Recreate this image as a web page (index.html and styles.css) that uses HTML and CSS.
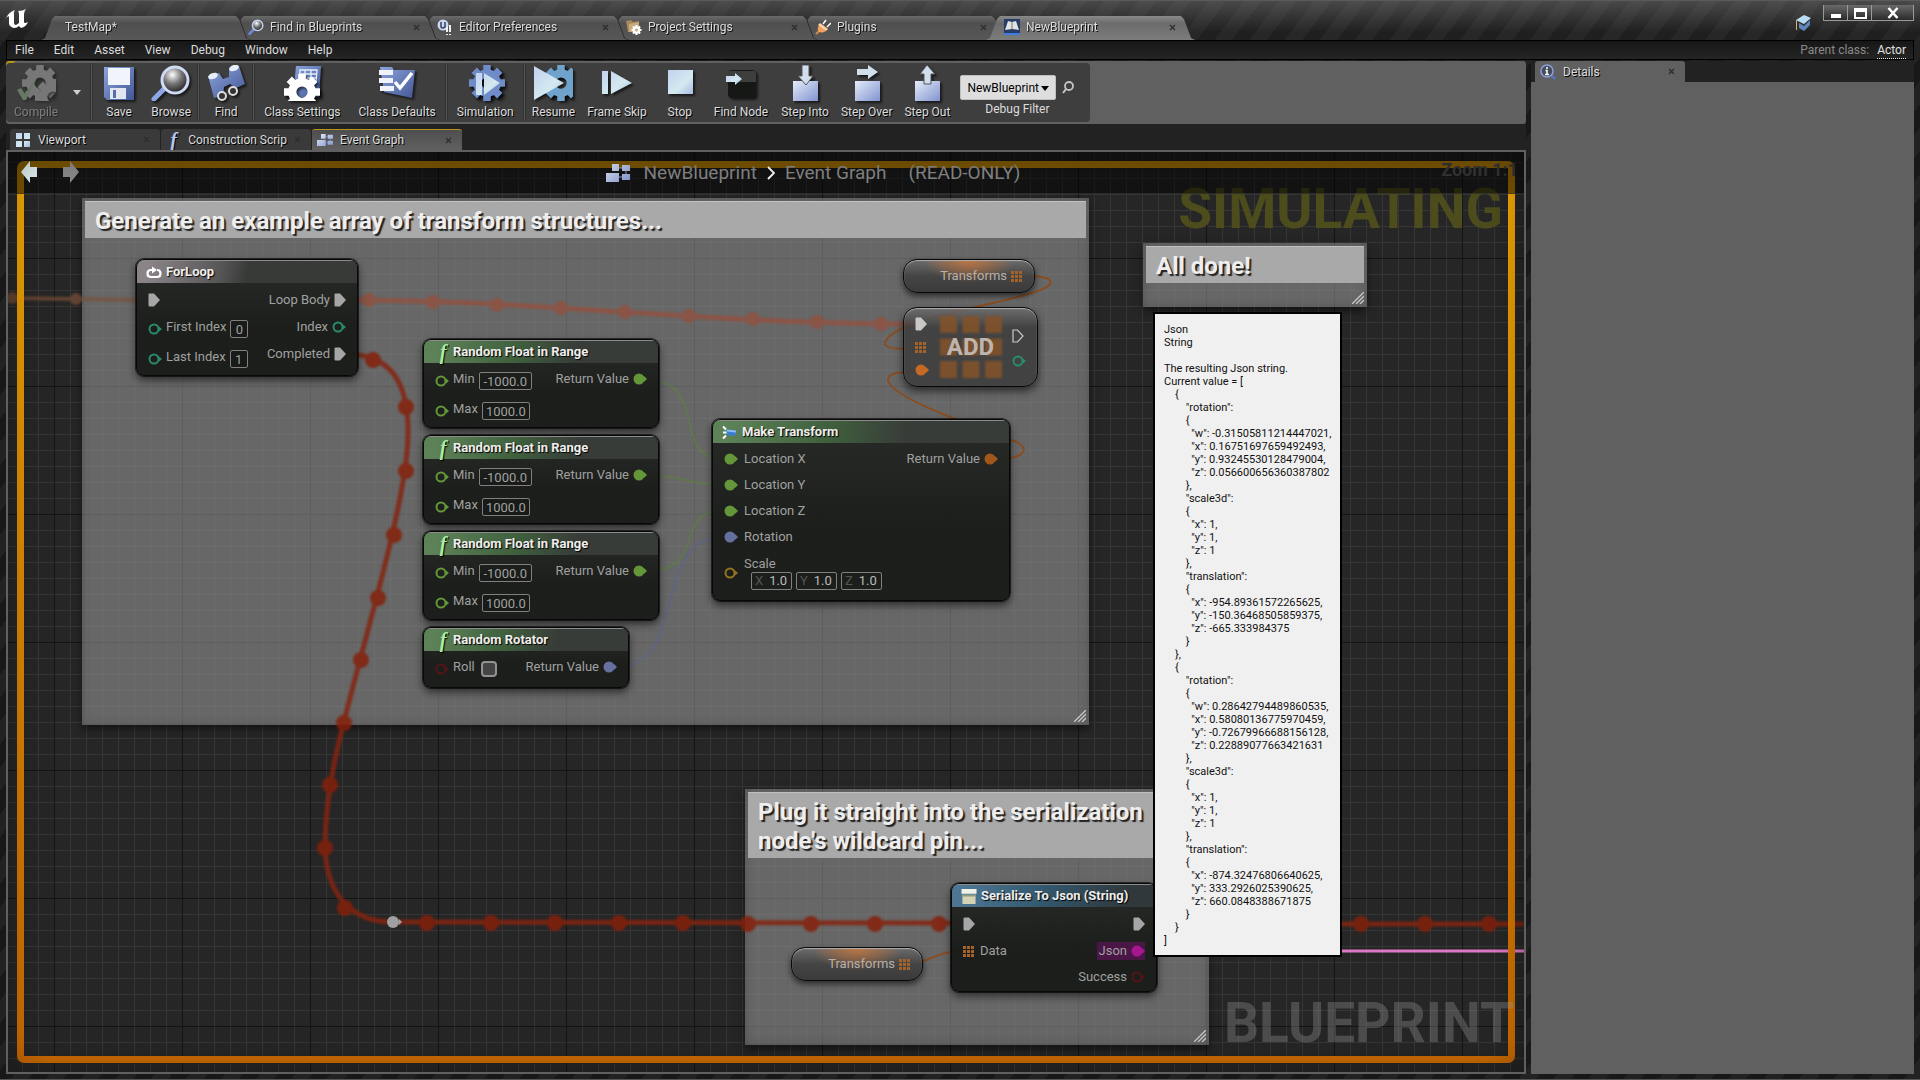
FILE: index.html
```
<!DOCTYPE html>
<html lang="en">
<head>
    <meta charset="UTF-8">
    <meta name="viewport" content="width=device-width, initial-scale=1.0">
    <title>NewBlueprint</title>
    <link rel="stylesheet" href="styles.css">
</head>
<body>
    <!-- Shared icon shapes -->
    <svg class="defs" aria-hidden="true">
        <defs>
            <linearGradient id="blue" x1="0" y1="0" x2="1" y2="1">
                <stop offset="0" stop-color="#e4ecfa"/>
                <stop offset="1" stop-color="#8193cf"/>
            </linearGradient>
            <linearGradient id="deep" x1="0" y1="0" x2="1" y2="1">
                <stop offset="0" stop-color="#8ca5dc"/>
                <stop offset="1" stop-color="#435796"/>
            </linearGradient>
            <linearGradient id="ice" x1="0" y1="0" x2="1" y2="1">
                <stop offset="0" stop-color="#c3d0ef"/>
                <stop offset="0.6" stop-color="#d3eaf0"/>
                <stop offset="1" stop-color="#a9b9e2"/>
            </linearGradient>
            <radialGradient id="lens" cx="0.4" cy="0.3" r="0.7">
                <stop offset="0" stop-color="#ffffff"/>
                <stop offset="0.5" stop-color="#777777"/>
                <stop offset="1" stop-color="#222222"/>
            </radialGradient>
        </defs>
        <symbol id="pin-open" viewBox="0 0 14 12">
            <circle cx="6" cy="6" r="4.5" fill="none" stroke="currentColor" stroke-width="2"/>
            <path d="M11 3.5L14 6L11 8.500z" fill="currentColor"/>
        </symbol>
        <symbol id="pin-full" viewBox="0 0 14 12">
            <circle cx="6" cy="6" r="5.5" fill="currentColor"/>
            <path d="M11 3L14 6L11 9z" fill="currentColor"/>
        </symbol>
        <symbol id="exec" viewBox="0 0 12 14">
            <path d="M1.500 0.500H6L12 7L6 13.500H1.500Q0.500 13.500 0.500 12.500V1.500Q0.500 0.500 1.500 0.500z" fill="currentColor"/>
        </symbol>
        <symbol id="exec-open" viewBox="0 0 12 14">
            <path d="M1 1H5.500L11 7L5.500 13H1z" fill="none" stroke="currentColor" stroke-width="1.2"/>
        </symbol>
        <symbol id="array" viewBox="0 0 11 11">
            <path d="M0 0h3v3H0zM4 0h3v3H4zM8 0h3v3H8zM0 4h3v3H0zM4 4h3v3H4zM8 4h3v3H8zM0 8h3v3H0zM4 8h3v3H4zM8 8h3v3H8z" fill="currentColor"/>
        </symbol>
        <symbol id="gear" viewBox="-12 -12 24 24">
            <g fill="currentColor">
                <path d="M-2.500 -12h5v5h-5zM-2.500 7h5v5h-5z"/>
                <path d="M-2.500 -12h5v5h-5zM-2.500 7h5v5h-5z" transform="rotate(45)"/>
                <path d="M-2.500 -12h5v5h-5zM-2.500 7h5v5h-5z" transform="rotate(90)"/>
                <path d="M-2.500 -12h5v5h-5zM-2.500 7h5v5h-5z" transform="rotate(135)"/>
            </g>
            <circle r="6.500" fill="none" stroke="currentColor" stroke-width="5.500"/>
        </symbol>
        <symbol id="graph" viewBox="0 0 24 18">
            <path d="M6 0h7v7H6zM16 1h8v6h-8zM0 9h13v9H0zM16 10h8v6h-8z" fill="url(#blue)"/>
            <path d="M13 4h3M13 13h3M20 7v3" stroke="#8fa0d0"/>
        </symbol>
        <symbol id="glass" viewBox="0 0 20 20">
            <path d="M2 18.500L8 12" stroke="#6c88cc" stroke-width="3.500" stroke-linecap="round"/>
            <circle cx="12" cy="8" r="6.500" fill="url(#lens)" stroke="#c4d0f0" stroke-width="1.800"/>
        </symbol>
        <symbol id="close" viewBox="0 0 7 7">
            <path d="M1 1L6 6M6 1L1 6" stroke="currentColor" stroke-width="1.4"/>
        </symbol>
        <symbol id="grip" viewBox="0 0 12 12">
            <path d="M0 12L12 0M4 12L12 4M8 12L12 8" stroke="#c8c8c8" stroke-width="1.3"/>
        </symbol>
    </svg>

    <!-- Title bar -->
    <header class="titlebar">
        <svg class="logo" viewBox="0 0 22 20">
            <path d="M0 9Q3 3 9 1Q7 3 8 6V14Q8 16 10 16L13 14V5Q13 3 12 2Q17 2 20 0Q18 2 18 5V13Q18 15 22 13Q20 18 15 19L13 17Q11 19 8 19Q4 18 3 15V8Q3 6 0 9z" fill="#ffffff"/>
        </svg>
        <nav class="doc-tabs">
            <div class="doc-tab"><button type="button" class="no-icon"><span>TestMap*</span></button></div>
            <div class="doc-tab"><button type="button"><svg class="i16"><use href="#glass"/></svg><span>Find in Blueprints</span><svg class="x"><use href="#close"/></svg></button></div>
            <div class="doc-tab"><button type="button">
                <svg class="i16" viewBox="0 0 16 16"><circle cx="6" cy="6" r="5.500" fill="#cdd7ef"/><path d="M4 3v5q0 1 2 1l2-1V3" stroke="#32405c" stroke-width="1.500" fill="none"/><path d="M10 8v5M13 6v7M10 15v1M13 15v1" stroke="#fff" stroke-width="1.800"/></svg>
                <span>Editor Preferences</span><svg class="x"><use href="#close"/></svg></button></div>
            <div class="doc-tab"><button type="button">
                <svg class="i16" viewBox="0 0 16 16"><path d="M0 2l5-1 2 2 6-1v11H2z" fill="#a8885c"/><path d="M3 5l10-2v10H3z" fill="#c6aa78"/><svg x="5" y="6" width="11" height="10" color="#fff"><use href="#gear"/></svg></svg>
                <span>Project Settings</span><svg class="x"><use href="#close"/></svg></button></div>
            <div class="doc-tab"><button type="button">
                <svg class="i16" viewBox="0 0 16 16"><path d="M1 15l4-4" stroke="#d98a48" stroke-width="2"/><path d="M4 6l7 6q-5 3-8 0-1-3 1-6z" fill="#f0a060"/><path d="M5 4l8 6-2 2-8-6z" fill="#ffd2a0"/><path d="M8 5l3-4M12 8l4-4" stroke="#fff" stroke-width="1.500"/></svg>
                <span>Plugins</span><svg class="x"><use href="#close"/></svg></button></div>
            <div class="doc-tab active"><button type="button">
                <svg class="i16" viewBox="0 0 16 16"><path d="M0 0h16v16H0z" fill="#263c66"/><path d="M0 14h16v2H0z" fill="#3f7be0"/><path d="M1 11L4 2l4 1 4-1 3 9-7-1z" fill="#e2e2e2"/><path d="M8 3v7" stroke="#777"/></svg>
                <span>NewBlueprint</span><svg class="x"><use href="#close"/></svg></button></div>
        </nav>
        <div class="window-tools">
            <svg class="tutorial" viewBox="0 0 16 16"><path d="M1 5l8-5 7 3-7 6z" fill="#b9dcf6"/><path d="M4 8l5 3 6-6v5l-6 6-5-3z" fill="#5e86b8"/><path d="M1.500 5v10" stroke="#d8b070"/></svg>
            <div class="window-buttons">
                <button type="button" aria-label="Minimize"><svg viewBox="0 0 14 12"><path d="M2 7h10v4H2z" fill="#fff"/></svg></button>
                <button type="button" aria-label="Maximize"><svg viewBox="0 0 14 12"><path d="M2 2h11v9H2z" fill="none" stroke="#fff" stroke-width="2"/><path d="M2 4h11" stroke="#fff" stroke-width="2"/></svg></button>
                <button type="button" class="wide" aria-label="Close"><svg viewBox="0 0 14 12"><path d="M2.500 1l9 10M11.500 1l-9 10" stroke="#fff" stroke-width="2.600"/></svg></button>
            </div>
        </div>
    </header>

    <!-- Menu bar -->
    <div class="menubar">
        <nav class="menu">
            <button type="button">File</button>
            <button type="button">Edit</button>
            <button type="button">Asset</button>
            <button type="button">View</button>
            <button type="button">Debug</button>
            <button type="button">Window</button>
            <button type="button">Help</button>
        </nav>
        <div class="parent-class">Parent class: <a href="#">Actor</a></div>
    </div>

    <main class="workspace">
        <div class="editor">
            <!-- Toolbar -->
            <div class="toolbar">
                <div class="tools">
                    <button type="button" class="tool" disabled>
                        <svg viewBox="0 0 40 36"><svg x="4" y="0" width="20" height="20" color="#ccc"><use href="#gear"/></svg><svg x="17" y="14" width="22" height="22" color="#ccc"><use href="#gear"/></svg><path d="M1 25l4-2 4 6L23 9 10 35H7z" fill="#a4cfa0"/></svg>
                        <span>Compile</span>
                    </button>
                    <button type="button" class="caret" aria-label="Compile options"><svg viewBox="0 0 8 5"><path d="M0 0h8L4 5z" fill="#d0d0d0"/></svg></button>
                    <i class="sep"></i>
                    <button type="button" class="tool">
                        <svg viewBox="0 0 40 36"><path d="M5 2h30v33H8l-3-3z" fill="url(#deep)"/><path d="M9 3h22v17H9z" fill="#f1f4fb"/><path d="M11 23h16v11H11z" fill="#e2e6f0"/><path d="M14 25h3v8h-3z" fill="#5a6ca6"/></svg>
                        <span>Save</span>
                    </button>
                    <button type="button" class="tool">
                        <svg viewBox="0 0 40 36"><path d="M3 34L14 23" stroke="#8da7e6" stroke-width="5" stroke-linecap="round"/><circle cx="24" cy="15" r="13" fill="url(#lens)" stroke="#cfdaf5" stroke-width="3"/></svg>
                        <span>Browse</span>
                    </button>
                    <i class="sep"></i>
                    <button type="button" class="tool">
                        <svg viewBox="0 0 40 36"><path d="M2 11l11-3 4 6 6-2V3l10-2 6 18-9 4-6-4-6 3-1 9-9 2z" fill="url(#deep)"/><ellipse cx="7" cy="11" rx="5" ry="3" fill="#e8eef8" transform="rotate(-20 7 11)"/><ellipse cx="28" cy="3" rx="5" ry="3" fill="#e8eef8" transform="rotate(-20 28 3)"/><circle cx="16" cy="31" r="4" fill="#333" stroke="#ddd" stroke-width="2"/><circle cx="27" cy="26" r="4" fill="#333" stroke="#ddd" stroke-width="2"/></svg>
                        <span>Find</span>
                    </button>
                    <i class="sep"></i>
                    <button type="button" class="tool roomy">
                        <svg viewBox="0 0 40 36"><path d="M14 1h25l-2 31H11z" fill="url(#deep)"/><path d="M18 5h17l-1 12H17zM23 5v12M29 5v12M17 9h18M17 13h18" fill="none" stroke="#e8eefb" stroke-width="1.300"/><svg x="0" y="9" width="26" height="26" color="#fff"><use href="#gear"/></svg></svg>
                        <span>Class Settings</span>
                    </button>
                    <button type="button" class="tool roomy">
                        <svg viewBox="0 0 40 36"><path d="M3 2h12l2 3h21l-3 28L7 27z" fill="url(#deep)"/><path d="M2 5h14v5H2zM2 13h14v5H2zM3 21h14v5H3z" fill="#f0f3fb"/><path d="M18 17l5 6L35 8" fill="none" stroke="#fff" stroke-width="3.500"/></svg>
                        <span>Class Defaults</span>
                    </button>
                    <i class="sep"></i>
                    <button type="button" class="tool roomy">
                        <svg viewBox="0 0 40 36"><svg x="2" y="0" width="36" height="36" color="#6f8bc8"><use href="#gear"/></svg><path d="M11 8h6v22h-6zM19 8l16 10-16 12z" fill="url(#ice)"/></svg>
                        <span>Simulation</span>
                    </button>
                    <i class="sep"></i>
                    <button type="button" class="tool">
                        <svg viewBox="0 0 40 36"><svg x="8" y="0" width="34" height="34" color="#6fa3cc"><use href="#gear"/></svg><path d="M1 1l30 17L1 35z" fill="url(#ice)"/></svg>
                        <span>Resume</span>
                    </button>
                    <button type="button" class="tool">
                        <svg viewBox="0 0 40 36"><path d="M5 6h6v23H5zM14 6l21 12-21 11z" fill="url(#ice)"/></svg>
                        <span>Frame Skip</span>
                    </button>
                    <button type="button" class="tool spaced">
                        <svg viewBox="0 0 40 36"><path d="M8 5h25v24H8z" fill="url(#ice)"/></svg>
                        <span>Stop</span>
                    </button>
                    <button type="button" class="tool spaced">
                        <svg viewBox="0 0 40 36"><rect x="7" y="5" width="28" height="28" rx="4" fill="#151815"/><path d="M9 6h24q2 0 2 3v8H7V9q0-3 2-3z" fill="#3c3f3c"/><path d="M5 11h9V8l7 6-7 6v-3H5z" fill="url(#ice)"/></svg>
                        <span>Find Node</span>
                    </button>
                    <button type="button" class="tool">
                        <svg viewBox="0 0 40 36"><path d="M8 16h25v20H8z" fill="url(#blue)"/><path d="M17 0h7v11h4l-7 9-8-9h4z" fill="#d0deee" stroke="#555"/></svg>
                        <span>Step Into</span>
                    </button>
                    <button type="button" class="tool">
                        <svg viewBox="0 0 40 36"><path d="M8 16h25v20H8z" fill="url(#blue)"/><path d="M10 4h11V0l10 7-10 7v-4H10z" fill="#d0deee"/></svg>
                        <span>Step Over</span>
                    </button>
                    <button type="button" class="tool">
                        <svg viewBox="0 0 40 36"><path d="M8 16h25v20H8z" fill="url(#blue)"/><path d="M17 19V9h-4l7-9 8 9h-4v10z" fill="#d0deee" stroke="#555"/></svg>
                        <span>Step Out</span>
                    </button>
                    <div class="debug-filter">
                        <div class="filter-row">
                            <span class="select">
                                <select id="debug-filter"><option>NewBlueprint</option></select>
                                <svg viewBox="0 0 8 5"><path d="M0 0h8L4 5z" fill="#000"/></svg>
                            </span>
                            <button type="button" aria-label="Search"><svg viewBox="0 0 12 14"><circle cx="7" cy="5" r="4" fill="none" stroke="#c4c4c4" stroke-width="1.800"/><path d="M4 8L1 12" stroke="#c4c4c4" stroke-width="2"/></svg></button>
                        </div>
                        <label for="debug-filter">Debug Filter</label>
                    </div>
                </div>
            </div>

            <!-- Graph tabs -->
            <nav class="sub-tabs">
                <button type="button" class="sub-tab"><svg class="i16" viewBox="0 0 16 16"><path d="M1 1h6v6H1zM9 1h6v6H9zM1 9h6v6H1zM9 9h6v6H9z" fill="url(#ice)"/></svg><span>Viewport</span><svg class="x"><use href="#close"/></svg></button>
                <button type="button" class="sub-tab"><i class="fn blue">f</i><span>Construction Scrip</span><svg class="x"><use href="#close"/></svg></button>
                <button type="button" class="sub-tab active"><svg class="i16"><use href="#graph"/></svg><span>Event Graph</span><svg class="x"><use href="#close"/></svg></button>
            </nav>

            <!-- Graph -->
            <section class="graph">
                <div class="watermark simulating">SIMULATING</div>
                <div class="watermark blueprint">BLUEPRINT</div>

                <div class="comment" id="comment-generate">
                    <h2>Generate an example array of transform structures...</h2>
                    <svg class="grip"><use href="#grip"/></svg>
                </div>
                <div class="comment" id="comment-done">
                    <h2>All done!</h2>
                    <svg class="grip"><use href="#grip"/></svg>
                </div>
                <div class="comment" id="comment-plug">
                    <h2>Plug it straight into the serialization node's wildcard pin...</h2>
                    <svg class="grip"><use href="#grip"/></svg>
                </div>

                <svg class="wires" viewBox="8 152 1516 920" fill="none">
                    <g class="wire-old">
                        <path d="M8 298L147 300"/>
                        <circle cx="12" cy="298" r="6"/><circle cx="76" cy="299" r="6"/>
                    </g>
                    <g class="wire-loop">
                        <path d="M346 300C540 300 700 324 915 324"/>
                        <circle cx="369" cy="300" r="7"/><circle cx="433" cy="302" r="7"/><circle cx="497" cy="305" r="7"/>
                        <circle cx="561" cy="308" r="7"/><circle cx="625" cy="312" r="7"/><circle cx="689" cy="316" r="7"/>
                        <circle cx="753" cy="319" r="7"/><circle cx="817" cy="322" r="7"/><circle cx="881" cy="324" r="7"/>
                    </g>
                    <g class="wire-exec">
                        <path d="M346 354C392 354 409 384 408 435C407 490 378 592 360 660C344 722 325 782 325 848C327 896 352 922 393 922L963 923"/>
                        <path d="M1145 924H1524"/>
                        <circle cx="373" cy="360" r="8"/><circle cx="406" cy="407" r="8"/><circle cx="406" cy="471" r="8"/>
                        <circle cx="394" cy="535" r="8"/><circle cx="378" cy="598" r="8"/><circle cx="361" cy="660" r="8"/>
                        <circle cx="344" cy="723" r="8"/><circle cx="330" cy="785" r="8"/><circle cx="325" cy="848" r="8"/>
                        <circle cx="345" cy="908" r="8"/><circle cx="427" cy="923" r="8"/><circle cx="491" cy="923" r="8"/>
                        <circle cx="555" cy="923" r="8"/><circle cx="619" cy="923" r="8"/><circle cx="683" cy="923" r="8"/>
                        <circle cx="748" cy="924" r="8"/><circle cx="811" cy="924" r="8"/><circle cx="875" cy="924" r="8"/>
                        <circle cx="939" cy="924" r="8"/><circle cx="1361" cy="924" r="8"/><circle cx="1425" cy="924" r="8"/>
                        <circle cx="1489" cy="924" r="8"/>
                    </g>
                    <g class="wire-float">
                        <path d="M646 380C710 380 670 459 723 459"/>
                        <path d="M646 475C680 475 690 485 723 485"/>
                        <path d="M646 571C710 571 670 511 723 511"/>
                    </g>
                    <path class="wire-rotator" d="M616 667C690 667 650 537 723 537"/>
                    <g class="wire-struct">
                        <path d="M1022 276C1050 275 1054 281 1048 286C1028 302 888 316 885 344C887 349 898 349 915 349"/>
                        <path d="M997 459C1030 459 1030 444 1010 440C980 428 890 398 888 380C889 372 900 372 915 372"/>
                        <path d="M904 964C930 964 935 951 963 951"/>
                    </g>
                    <path class="wire-string" d="M1145 951H1524"/>
                    <ellipse cx="393" cy="922" rx="6" ry="6" fill="#a0a0a0"/>
                    <path d="M399 919l3 3-3 3z" fill="#a0a0a0"/>
                </svg>

                <article class="node grey" id="for-loop">
                    <h3><svg class="head-icon" viewBox="0 0 16 14"><path d="M7 4.500H5Q1.500 4.500 1.500 8Q1.500 11.500 5 11.500H11Q14.500 11.500 14.500 8Q14.500 4.500 11 4.500" fill="none" stroke="#fff" stroke-width="2.200"/><path d="M6 1l5 3.500L6 8z" fill="#fff"/></svg>ForLoop</h3>
                    <div class="pins">
                        <div class="in">
                            <div class="pin exec-row"><svg class="exec"><use href="#exec"/></svg></div>
                            <div class="pin field"><svg class="dot teal"><use href="#pin-open"/></svg><label for="first-index">First Index</label><input type="text" id="first-index" class="digit" value="0"></div>
                            <div class="pin field"><svg class="dot teal"><use href="#pin-open"/></svg><label for="last-index">Last Index</label><input type="text" id="last-index" class="digit" value="1"></div>
                        </div>
                        <div class="out">
                            <div class="pin exec-row"><span>Loop Body</span><svg class="exec"><use href="#exec"/></svg></div>
                            <div class="pin"><span>Index</span><svg class="dot teal"><use href="#pin-open"/></svg></div>
                            <div class="pin exec-row"><span>Completed</span><svg class="exec"><use href="#exec"/></svg></div>
                        </div>
                    </div>
                </article>

                <article class="node green" id="float-1">
                    <h3><i class="fn">f</i>Random Float in Range</h3>
                    <div class="pins">
                        <div class="in">
                            <div class="pin field"><svg class="dot lime"><use href="#pin-open"/></svg><label for="min-1">Min</label><input type="text" id="min-1" class="long" value="-1000.0"></div>
                            <div class="pin field"><svg class="dot lime"><use href="#pin-open"/></svg><label for="max-1">Max</label><input type="text" id="max-1" class="mid" value="1000.0"></div>
                        </div>
                        <div class="out"><div class="pin"><span>Return Value</span><svg class="dot lime"><use href="#pin-full"/></svg></div></div>
                    </div>
                </article>
                <article class="node green" id="float-2">
                    <h3><i class="fn">f</i>Random Float in Range</h3>
                    <div class="pins">
                        <div class="in">
                            <div class="pin field"><svg class="dot lime"><use href="#pin-open"/></svg><label for="min-2">Min</label><input type="text" id="min-2" class="long" value="-1000.0"></div>
                            <div class="pin field"><svg class="dot lime"><use href="#pin-open"/></svg><label for="max-2">Max</label><input type="text" id="max-2" class="mid" value="1000.0"></div>
                        </div>
                        <div class="out"><div class="pin"><span>Return Value</span><svg class="dot lime"><use href="#pin-full"/></svg></div></div>
                    </div>
                </article>
                <article class="node green" id="float-3">
                    <h3><i class="fn">f</i>Random Float in Range</h3>
                    <div class="pins">
                        <div class="in">
                            <div class="pin field"><svg class="dot lime"><use href="#pin-open"/></svg><label for="min-3">Min</label><input type="text" id="min-3" class="long" value="-1000.0"></div>
                            <div class="pin field"><svg class="dot lime"><use href="#pin-open"/></svg><label for="max-3">Max</label><input type="text" id="max-3" class="mid" value="1000.0"></div>
                        </div>
                        <div class="out"><div class="pin"><span>Return Value</span><svg class="dot lime"><use href="#pin-full"/></svg></div></div>
                    </div>
                </article>
                <article class="node green" id="rotator">
                    <h3><i class="fn">f</i>Random Rotator</h3>
                    <div class="pins">
                        <div class="in">
                            <div class="pin field"><svg class="dot maroon"><use href="#pin-open"/></svg><label for="roll">Roll</label><input type="checkbox" id="roll"></div>
                        </div>
                        <div class="out"><div class="pin"><span>Return Value</span><svg class="dot violet"><use href="#pin-full"/></svg></div></div>
                    </div>
                </article>

                <article class="node green" id="make-transform">
                    <h3><svg class="head-icon" viewBox="0 0 16 14"><path d="M1 1l3 3M1 13l3-3M1 7h4" stroke="#fff" stroke-width="2"/><path d="M4 4l10 1v5H5z" fill="#3b7ed0"/><path d="M4 4l10 1v2L5 6z" fill="#8bbcf0"/></svg>Make Transform</h3>
                    <div class="pins">
                        <div class="in">
                            <div class="pin"><svg class="dot lime"><use href="#pin-full"/></svg><span>Location X</span></div>
                            <div class="pin"><svg class="dot lime"><use href="#pin-full"/></svg><span>Location Y</span></div>
                            <div class="pin"><svg class="dot lime"><use href="#pin-full"/></svg><span>Location Z</span></div>
                            <div class="pin"><svg class="dot violet"><use href="#pin-full"/></svg><span>Rotation</span></div>
                            <div class="pin vector">
                                <svg class="dot gold"><use href="#pin-open"/></svg>
                                <div>
                                    <span>Scale</span>
                                    <div class="axes">
                                        <label>X<input type="text" value="1.0"></label>
                                        <label>Y<input type="text" value="1.0"></label>
                                        <label>Z<input type="text" value="1.0"></label>
                                    </div>
                                </div>
                            </div>
                        </div>
                        <div class="out"><div class="pin"><span>Return Value</span><svg class="dot orange"><use href="#pin-full"/></svg></div></div>
                    </div>
                </article>

                <div class="variable" id="transforms-1"><span>Transforms</span><svg class="array"><use href="#array"/></svg></div>
                <div class="variable" id="transforms-2"><span>Transforms</span><svg class="array"><use href="#array"/></svg></div>

                <article class="add-node" id="add">
                    <div class="add-in">
                        <svg class="exec"><use href="#exec"/></svg>
                        <svg class="array"><use href="#array"/></svg>
                        <svg class="dot"><use href="#pin-full"/></svg>
                    </div>
                    <div class="add-mark"><svg><use href="#array"/></svg><b>ADD</b></div>
                    <div class="add-out">
                        <svg class="exec"><use href="#exec-open"/></svg>
                        <svg class="dot teal"><use href="#pin-open"/></svg>
                    </div>
                </article>

                <article class="node azure" id="serialize">
                    <h3><svg class="head-icon" viewBox="0 0 16 16"><path d="M0 0h16v5H0z" fill="#f0f2e8"/><path d="M1 6h14v10H1z" fill="#d6d2b4"/><path d="M1 6h14v2H1z" fill="#8f9a86"/></svg>Serialize To Json (String)</h3>
                    <div class="pins">
                        <div class="in">
                            <div class="pin exec-row"><svg class="exec"><use href="#exec"/></svg></div>
                            <div class="pin"><svg class="array"><use href="#array"/></svg><span>Data</span></div>
                        </div>
                        <div class="out">
                            <div class="pin exec-row"><svg class="exec"><use href="#exec"/></svg></div>
                            <div class="pin"><div class="hovered"><span>Json</span><svg class="dot magenta"><use href="#pin-full"/></svg></div></div>
                            <div class="pin"><span>Success</span><svg class="dot maroon"><use href="#pin-open"/></svg></div>
                        </div>
                    </div>
                </article>

                <div class="sim-frame"></div>
                <div class="graph-head">
                    <div class="history">
                        <button type="button" aria-label="Back"><svg viewBox="0 0 16 22"><path d="M0 11L9 0v6h7v10H9v6z" fill="#e0f0f0"/></svg></button>
                        <button type="button" aria-label="Forward"><svg viewBox="0 0 16 22"><path d="M16 11L7 0v6H0v10h7v6z" fill="#8a8a8a"/></svg></button>
                    </div>
                    <div class="crumbs">
                        <svg class="crumb-icon"><use href="#graph"/></svg>
                        <span>NewBlueprint</span>
                        <svg class="chevron" viewBox="0 0 8 14"><path d="M1 1l6 6-6 6" fill="none" stroke="#fff" stroke-width="1.800"/></svg>
                        <span>Event Graph</span>
                        <span class="readonly">(READ-ONLY)</span>
                    </div>
                    <div class="zoom">Zoom 1:1</div>
                </div>

                <pre class="tooltip">Json
String

The resulting Json string.
Current value = [
    {
        "rotation":
        {
          "w": -0.31505811214447021,
          "x": 0.16751697659492493,
          "y": 0.93245530128479004,
          "z": 0.056600656360387802
        },
        "scale3d":
        {
          "x": 1,
          "y": 1,
          "z": 1
        },
        "translation":
        {
          "x": -954.89361572265625,
          "y": -150.36468505859375,
          "z": -665.333984375
        }
    },
    {
        "rotation":
        {
          "w": 0.28642794489860535,
          "x": 0.58080136775970459,
          "y": -0.72679966688156128,
          "z": 0.22889077663421631
        },
        "scale3d":
        {
          "x": 1,
          "y": 1,
          "z": 1
        },
        "translation":
        {
          "x": -874.32476806640625,
          "y": 333.2926025390625,
          "z": 660.0848388671875
        }
    }
]</pre>
            </section>
        </div>

        <!-- Details -->
        <aside class="details">
            <nav class="sub-tabs">
                <button type="button" class="sub-tab active"><svg class="i16" viewBox="0 0 16 16"><path d="M11 11l4 4" stroke="#5672c0" stroke-width="2.500"/><circle cx="7" cy="7" r="6" fill="#454c5c" stroke="#8aa0dc" stroke-width="1.500"/><path d="M7 3v2M5.500 6.500H7V10M5 10.500h4" stroke="#fff" stroke-width="1.500" fill="none"/></svg><span>Details</span><svg class="x"><use href="#close"/></svg></button>
            </nav>
            <div class="details-body"></div>
        </aside>
    </main>
</body>
</html>
```
FILE: styles.css
```
* {
    box-sizing: border-box;
}

body {
    margin: 0;
    height: 100vh;
    display: flex;
    flex-direction: column;
    padding: 0 6px 5px;
    overflow: hidden;
    font-family: Roboto, "Liberation Sans", sans-serif;
    font-size: 12px;
    line-height: 16px;
    color: #dcdcdc;
    background-color: #222;
    background-image: repeating-linear-gradient(127deg, #181818 0 14px, #222 14px 28px);
    border-top: 1px solid #5a5a5a;
    border-bottom: 1px solid #555;
}

button {
    font: inherit;
    color: inherit;
    background: none;
    border: none;
    padding: 0;
}

h2, h3, pre {
    margin: 0;
    font-family: inherit;
}

svg {
    display: block;
    flex: none;
}

.defs {
    position: absolute;
    width: 0;
    height: 0;
}

.i16 {
    width: 16px;
    height: 16px;
}

.x {
    width: 7px;
    height: 7px;
    margin-left: auto;
    color: #2e2e2e;
}

/* Title bar */
.titlebar {
    display: flex;
    height: 39px;
    margin: 0 -6px;
    padding: 4px 6px 0;
    background-image: linear-gradient(rgba(120, 120, 120, 0.5), rgba(60, 60, 60, 0.2) 80%);
}

.logo {
    width: 22px;
    height: 20px;
    margin-top: 4px;
}

.doc-tabs {
    display: flex;
    align-items: flex-end;
    margin-left: 13px;
    flex: 1;
}

.doc-tab {
    position: relative;
    width: 209px;
    height: 24px;
    margin-right: -20px;
    filter: drop-shadow(1px 0 0 #2c2c2c);
}

.doc-tab:nth-child(1) { z-index: 5; }
.doc-tab:nth-child(2) { z-index: 4; }
.doc-tab:nth-child(3) { z-index: 3; }
.doc-tab:nth-child(4) { z-index: 2; }
.doc-tab:nth-child(5) { z-index: 1; }
.doc-tab.active { z-index: 6; }

.doc-tab button {
    display: flex;
    align-items: center;
    gap: 6px;
    width: 100%;
    height: 24px;
    padding: 0 19px 2px 18px;
    text-shadow: 1px 1px 0 #111;
    background: linear-gradient(#6a6a6a, #4f4f4f 30%, #585858);
    clip-path: polygon(0 100%, 4px 92%, 11px 12%, 14px 0, calc(100% - 14px) 0, calc(100% - 11px) 12%, calc(100% - 4px) 92%, 100% 100%);
}

.doc-tab button.no-icon {
    padding-left: 24px;
}

.doc-tab.active button {
    background: linear-gradient(#8a8a8a, #6c6c6c 30%, #7c7c7c);
}

.window-tools {
    display: flex;
    gap: 12px;
}

.tutorial {
    width: 16px;
    height: 16px;
    margin-top: 10px;
}

.window-buttons {
    display: flex;
    height: 16px;
    border: 1px solid #9a9a9a;
    border-top: none;
    background: linear-gradient(#6a6a6a, #2a2a2a);
}

.window-buttons button {
    width: 24px;
    display: flex;
    align-items: center;
    justify-content: center;
    border-right: 1px solid #9a9a9a;
}

.window-buttons .wide {
    width: 41px;
    border-right: none;
}

.window-buttons svg {
    width: 14px;
    height: 12px;
}

/* Menu bar */
.menubar {
    display: flex;
    justify-content: space-between;
    align-items: center;
    height: 20px;
    margin-bottom: 1px;
    border: 1px solid #000;
    background: linear-gradient(#161616, #252525);
}

.menu {
    display: flex;
    gap: 20px;
    padding-left: 8px;
}

.parent-class {
    display: flex;
    gap: 8px;
    margin-right: 7px;
    color: #8a8a8a;
}

.parent-class a {
    color: #e0e0e0;
    text-decoration: none;
    border-bottom: 1px dotted #e0e0e0;
}

/* Workspace */
.workspace {
    flex: 1;
    min-height: 0;
    display: grid;
    grid-template-columns: minmax(0, 1fr) 383px;
    gap: 5px;
}

.editor {
    display: flex;
    flex-direction: column;
    min-width: 0;
    background: #222;
}

/* Toolbar */
.toolbar {
    height: 63px;
    padding: 2px 0;
    border-radius: 3px;
    background: linear-gradient(135deg, #b8921e 7px, #606060 7px);
}

.tools {
    display: inline-flex;
    height: 59px;
    padding: 2px 8px 2px 2px;
    border-radius: 4px;
    background: #3e3e3e;
}

.tool {
    display: flex;
    flex-direction: column;
    align-items: center;
    gap: 3px;
    min-width: 52px;
    padding: 0 6px;
    text-shadow: 1px 1px 0 #000;
}

.tool.roomy {
    padding: 0 9px;
}

.tool.spaced {
    min-width: 54px;
    padding: 0 7px;
}

.tool svg {
    width: 40px;
    height: 36px;
    margin: 0 -6px;
    filter: drop-shadow(2px 2px 1px rgba(0, 0, 0, 0.6));
}

.tool:disabled {
    opacity: 0.4;
}

.caret {
    width: 26px;
    padding-left: 9px;
}

.caret svg {
    width: 8px;
    height: 5px;
}

.sep {
    width: 3px;
    flex: none;
    background: #585858;
    border-left: 1px solid #303030;
    border-right: 1px solid #303030;
}

.debug-filter {
    display: flex;
    flex-direction: column;
    align-items: center;
    gap: 1px;
    padding: 10px 8px 0 4px;
}

.filter-row {
    display: flex;
    align-items: center;
    gap: 6px;
}

.filter-row button svg {
    width: 12px;
    height: 14px;
}

.select {
    position: relative;
}

.select select {
    appearance: none;
    display: block;
    width: 96px;
    height: 25px;
    padding: 0 6px;
    font: inherit;
    color: #000;
    border: 1px solid #c0c0c0;
    border-radius: 2px;
    background: #dedede;
}

.select svg {
    position: absolute;
    right: 7px;
    top: 11px;
    width: 8px;
    height: 5px;
}

/* Panel tabs */
.sub-tabs {
    display: flex;
    gap: 1px;
    height: 21px;
    padding-left: 4px;
}

.editor .sub-tabs {
    margin-top: 5px;
}

.sub-tab {
    display: flex;
    align-items: center;
    gap: 7px;
    width: 150px;
    padding: 0 10px 0 5px;
    white-space: nowrap;
    text-shadow: 1px 1px 0 #000;
    border-radius: 3px 3px 0 0;
    background: #3a3a3a;
}

.sub-tab.active {
    background: #606060;
}

.editor .sub-tab.active {
    border-top: 1px solid #b8921e;
    background: linear-gradient(#4e4e4e, #606060);
}

.fn {
    width: 16px;
    text-align: center;
    font: italic bold 20px/20px "Liberation Serif", serif;
    color: #a6f0a6;
}

.fn.blue {
    color: #b4c4f2;
}

/* Details */
.details {
    display: flex;
    flex-direction: column;
    background: #222;
}

.details-body {
    flex: 1;
    background: #606060;
}

/* Graph */
.graph {
    position: relative;
    flex: 1;
    overflow: hidden;
    border: 2px solid #606060;
    background-color: #262626;
    background-image:
        linear-gradient(90deg, #141414 1px, transparent 1px),
        linear-gradient(#141414 1px, transparent 1px),
        linear-gradient(90deg, #363636 1px, transparent 1px),
        linear-gradient(#363636 1px, transparent 1px);
    background-size: 128px 128px, 128px 128px, 16px 16px, 16px 16px;
    background-position: 46px 106px, 46px 106px, 46px 106px, 46px 106px;
    font-size: 13px;
}

.graph::after {
    content: "";
    position: absolute;
    inset: 0;
    box-shadow: inset 0 0 40px rgba(0, 0, 0, 0.35);
    pointer-events: none;
}

.watermark {
    position: absolute;
    font-size: 55px;
    line-height: 46px;
    font-weight: bold;
}

.simulating {
    top: 34px;
    right: 21px;
    color: #4c4c1c;
}

.blueprint {
    right: 10px;
    bottom: 26px;
    z-index: 3;
    color: rgba(150, 150, 150, 0.35);
}

.comment {
    position: absolute;
    padding: 3px;
    background: rgba(150, 150, 150, 0.58);
    box-shadow: 0 4px 8px rgba(0, 0, 0, 0.5), inset 0 0 8px rgba(60, 60, 60, 0.5);
}

.comment h2 {
    padding: 5px 10px 2px;
    font-size: 24px;
    line-height: 29px;
    color: #eee;
    text-shadow: 2px 2px 1px #222;
    background: #a9a9a9;
    border-top: 1px solid #c0c0c0;
}

.grip {
    position: absolute;
    right: 3px;
    bottom: 3px;
    width: 12px;
    height: 12px;
}

#comment-generate { left: 74px; top: 46px; width: 1007px; height: 527px; }
#comment-done { left: 1135px; top: 91px; width: 224px; height: 64px; }
#comment-plug { left: 737px; top: 637px; width: 464px; height: 256px; }

/* Wires */
.wires {
    position: absolute;
    left: 0;
    top: 0;
    width: 1516px;
    height: 920px;
}

.wire-old {
    stroke: #7a5038;
    stroke-width: 4px;
    opacity: 0.7;
    filter: blur(1px);
}

.wire-old circle { fill: #7a5038; stroke: none; }

.wire-loop {
    stroke: #93503f;
    stroke-width: 5px;
    opacity: 0.8;
    filter: blur(1px);
}

.wire-loop circle { fill: #93503f; stroke: none; }

.wire-exec {
    stroke: #852410;
    stroke-width: 5px;
    opacity: 0.85;
    filter: blur(1px);
}

.wire-exec circle { fill: #85200a; stroke: none; }

.wire-float { stroke: #5c8040; stroke-width: 2px; opacity: 0.6; }
.wire-rotator { stroke: #5d648c; stroke-width: 2px; opacity: 0.7; }
.wire-struct { stroke: #8a4d20; stroke-width: 2px; }
.wire-string { stroke: #dc78c4; stroke-width: 3px; }

/* Nodes */
.node {
    position: absolute;
    border: 1px solid #080808;
    border-radius: 8px;
    overflow: hidden;
    color: #a0a0a0;
    background: linear-gradient(rgba(38, 41, 38, 0.97), rgba(25, 28, 24, 0.97) 60%);
    box-shadow: 0 0 0 1px rgba(0, 0, 0, 0.6), 0 4px 8px rgba(0, 0, 0, 0.6);
}

.node h3 {
    display: flex;
    align-items: center;
    gap: 2px;
    height: 23px;
    padding: 0 10px 0 9px;
    font-size: 13px;
    line-height: 16px;
    color: #eee;
    text-shadow: 1px 1px 1px #000;
    border-top: 1px solid #8c8c8c;
}

.grey h3 { background: linear-gradient(100deg, #8a8488 5%, #575657 38%, #383a38 50%); }
.green h3 { background: linear-gradient(100deg, #5d8258 5%, #3f5f3d 40%, #383c38 65%); }
.azure h3 { background: linear-gradient(100deg, #4d7692 5%, #33586e 45%, #30383c 85%); }

.head-icon {
    width: 16px;
    height: 15px;
    margin-right: 2px;
}

.node .fn {
    margin: 0 0 0 2px;
}

.pins {
    display: flex;
    justify-content: space-between;
    padding: 3px 11px 1px;
}

.pin {
    display: flex;
    align-items: center;
    gap: 6px;
    height: 26px;
}

.out .pin {
    justify-content: flex-end;
    gap: 4px;
}

.pin.exec-row {
    height: 28px;
}

.pin.field {
    gap: 4px;
    height: 30px;
}

.pin.field label {
    padding-bottom: 4px;
}

.dot {
    width: 14px;
    height: 12px;
}

.exec {
    width: 12px;
    height: 14px;
    color: #a6a6a6;
}

.array {
    width: 11px;
    height: 11px;
    color: #a5622a;
}

.teal { color: #2a8a6c; }
.lime { color: #64963a; }
.maroon { color: #551518; }
.violet { color: #66709f; }
.gold { color: #93731d; }
.orange { color: #a2561c; }
.magenta { color: #a6178f; }

.node input[type="text"] {
    height: 18px;
    padding: 0;
    font: inherit;
    color: #a0a0a0;
    text-align: center;
    background: rgba(0, 0, 0, 0.1);
    border: 1px solid #808080;
    border-radius: 2px;
}

.node input.digit { width: 18px; }
.node input.mid { width: 48px; }
.node input.long { width: 53px; }

.node input[type="checkbox"] {
    appearance: none;
    width: 16px;
    height: 16px;
    margin: 0 0 0 2px;
    border: 2px solid #929292;
    border-radius: 4px;
    background: #444;
}

.pin.vector {
    height: 46px;
}

.vector .axes {
    display: flex;
    gap: 4px;
    padding-left: 7px;
}

.axes label {
    display: flex;
    width: 41px;
    height: 18px;
    padding-left: 3px;
    color: #555;
    border: 1px solid #808080;
    border-radius: 2px;
}

.node .axes input {
    width: 30px;
    height: 16px;
    border: none;
    background: none;
    color: #bbb;
}

.hovered {
    display: flex;
    align-items: center;
    gap: 4px;
    height: 18px;
    padding-left: 2px;
    background: #4a1646;
}

#for-loop { left: 128px; top: 107px; width: 222px; }
#float-1 { left: 415px; top: 187px; width: 236px; }
#float-2 { left: 415px; top: 283px; width: 236px; }
#float-3 { left: 415px; top: 379px; width: 236px; }
#rotator { left: 415px; top: 475px; width: 206px; height: 61px; }
#make-transform { left: 704px; top: 267px; width: 298px; height: 182px; }
#serialize { left: 943px; top: 731px; width: 206px; }

.variable {
    position: absolute;
    display: flex;
    align-items: center;
    justify-content: flex-end;
    gap: 4px;
    width: 132px;
    height: 34px;
    padding-right: 12px;
    color: #b4b0ac;
    border: 1px solid #080808;
    border-radius: 14px;
    background:
        radial-gradient(ellipse at 50% 0, rgba(208, 120, 56, 0.8), transparent 50%),
        linear-gradient(#6c6c6c, #454545 50%, #3a3a3a);
    box-shadow: inset 0 1px 1px #b0b0b0, 0 3px 6px rgba(0, 0, 0, 0.6);
}

#transforms-1 { left: 895px; top: 107px; }
#transforms-2 { left: 783px; top: 795px; }

.add-node {
    position: absolute;
    display: flex;
    justify-content: space-between;
    width: 135px;
    height: 80px;
    padding: 8px 11px;
    border: 1px solid #080808;
    border-radius: 14px;
    background: linear-gradient(rgba(110, 110, 110, 0.8), rgba(60, 60, 60, 0.85) 25%, rgba(62, 62, 62, 0.9));
    box-shadow: inset 0 1px 1px #b0b0b0, 0 4px 8px rgba(0, 0, 0, 0.6);
}

#add { left: 895px; top: 155px; }

.add-in {
    display: flex;
    flex-direction: column;
    gap: 11px;
    padding-top: 1px;
    color: #c46a24;
}

.add-in .exec,
.add-out .exec {
    color: #c8c8c8;
}

.add-out {
    display: flex;
    flex-direction: column;
    gap: 12px;
    padding-top: 13px;
}

.add-mark {
    position: relative;
    width: 62px;
    height: 62px;
    color: #855329;
}

.add-mark svg {
    width: 62px;
    height: 62px;
    opacity: 0.85;
    filter: blur(1px);
}

.add-mark b {
    position: absolute;
    inset: 0;
    text-align: center;
    font-size: 24px;
    line-height: 62px;
    color: #bdb5ae;
}

/* Simulation frame and graph header */
.sim-frame {
    position: absolute;
    inset: 9px;
    border: 7px solid #cf6c00;
    border-image: linear-gradient(#f0a800, #cf6c00) 7;
    clip-path: inset(0 round 7px);
}

.graph-head {
    position: absolute;
    inset: 0 0 auto;
    height: 42px;
    display: flex;
    align-items: center;
    justify-content: center;
    background: rgba(0, 0, 0, 0.5);
    border-bottom: 1px solid rgba(60, 60, 60, 0.6);
    font-size: 19px;
    line-height: 24px;
    color: #858585;
}

.history {
    position: absolute;
    left: 13px;
    top: 9px;
    display: flex;
    gap: 26px;
}

.history svg {
    width: 16px;
    height: 22px;
}

.crumbs {
    display: flex;
    align-items: center;
    gap: 10px;
    margin-left: 94px;
}

.crumb-icon {
    width: 24px;
    height: 20px;
    margin-right: 4px;
}

.chevron {
    width: 8px;
    height: 14px;
}

.readonly {
    margin-left: 12px;
}

.zoom {
    position: absolute;
    right: 6px;
    top: 6px;
    font-size: 18px;
    font-weight: bold;
    color: #333;
}

.tooltip {
    position: absolute;
    left: 1145px;
    top: 160px;
    width: 189px;
    padding: 9px 9px 8px;
    font-size: 11px;
    line-height: 13px;
    color: #111;
    background: #f0f0f0;
    border: 2px solid #000;
    z-index: 4;
}
```
